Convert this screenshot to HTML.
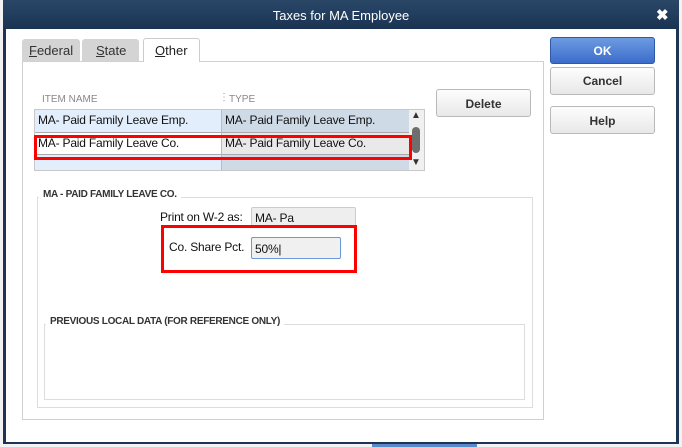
<!DOCTYPE html>
<html><head><style>
*{margin:0;padding:0;box-sizing:border-box}
body{width:682px;height:447px;background:#f0f0f0;font-family:"Liberation Sans",sans-serif;position:relative;overflow:hidden}
.a{position:absolute}
.btn{position:absolute;border:1px solid #b9b9b9;border-radius:3px;background:linear-gradient(#fdfdfd,#e8e8e8);font-size:12px;font-weight:bold;color:#333;text-align:center}
.t{font-size:12px;color:#111;letter-spacing:-0.2px}
.lg{position:absolute;background:#fff;padding:0 4px;font-size:10px;font-weight:bold;color:#333;letter-spacing:-0.3px}
</style></head><body>
<div class="a" style="left:0;top:0;width:682px;height:447px;background:#f3f3f3"></div>
<div class="a" style="left:372px;top:443px;width:105px;height:4px;background:#5b88c8"></div>
<div class="a" style="left:3px;top:0;width:676px;height:444px;background:#1d3554"></div>
<div class="a" style="left:6px;top:29px;width:670px;height:413px;background:#fff"></div>
<div class="a" style="left:3px;top:0;width:676px;height:29px;background:linear-gradient(#2a4768,#1b3352)"></div>
<div class="a" style="left:0;top:8px;width:682px;text-align:center;color:#fff;font-size:13px">Taxes for MA Employee</div>
<div class="a" style="left:656px;top:6px;color:#fff;font-size:15px;font-weight:bold">✖</div>

<div class="a" style="left:22px;top:39px;width:58px;height:23px;background:#d4d4d4;border-radius:3px 3px 0 0;font-size:13px;padding:4px 0 0 7px;color:#333"><u>F</u>ederal</div>
<div class="a" style="left:82px;top:39px;width:57px;height:23px;background:#d4d4d4;border-radius:3px 3px 0 0;font-size:13px;padding:4px 0 0 14px;color:#333"><u>S</u>tate</div>
<div class="a" style="left:143px;top:38px;width:57px;height:24px;background:#fff;border:1px solid #ccc;border-bottom:none;border-radius:3px 3px 0 0;font-size:13px;padding:4px 0 0 11px;color:#222"><u>O</u>ther</div>
<div class="a" style="left:22px;top:61px;width:522px;height:359px;border:1px solid #d0d0d0;border-top:none"></div>
<div class="a" style="left:200px;top:61px;width:344px;height:1px;background:#d0d0d0"></div>
<div class="a" style="left:22px;top:61px;width:121px;height:1px;background:#d0d0d0"></div>

<div class="a" style="left:42px;top:94px;font-size:10px;color:#888">ITEM NAME</div>
<div class="a" style="left:219px;top:92px;font-size:10px;color:#999">⋮</div>
<div class="a" style="left:229px;top:94px;font-size:10px;color:#888">TYPE</div>
<div class="a" style="left:34px;top:109px;width:391px;height:62px;border:1px solid #c8c8c8;background:#e3eefc"></div>
<div class="a" style="left:221px;top:110px;width:188px;height:60px;background:#cfdae7;border-left:1px solid #bbb"></div>
<div class="a" style="left:35px;top:132px;width:186px;height:23px;background:#fff;border-top:1px solid #aaa;border-bottom:1px solid #aaa"></div>
<div class="a" style="left:221px;top:132px;width:188px;height:23px;background:#e9e9e9;border-top:1px solid #aaa;border-bottom:1px solid #aaa;border-left:1px solid #bbb"></div>
<div class="a" style="left:409px;top:110px;width:15px;height:60px;background:#f0f0f0"></div>
<div class="a" style="left:411px;top:110px;font-size:10px;color:#333">▲</div>
<div class="a" style="left:412px;top:127px;width:8px;height:26px;background:#6e6e6e;border-radius:4px"></div>
<div class="a" style="left:411px;top:157px;font-size:10px;color:#333">▼</div>
<div class="a t" style="left:38px;top:113px">MA- Paid Family Leave Emp.</div>
<div class="a t" style="left:225px;top:113px">MA- Paid Family Leave Emp.</div>
<div class="a t" style="left:38px;top:136px">MA- Paid Family Leave Co.</div>
<div class="a t" style="left:225px;top:136px">MA- Paid Family Leave Co.</div>
<div class="a" style="left:34px;top:135px;width:378px;height:25px;border:3px solid #f00"></div>

<div class="btn" style="left:436px;top:89px;width:95px;height:28px;padding-top:7px">Delete</div>
<div class="btn" style="left:550px;top:37px;width:105px;height:27px;padding-top:6px;background:linear-gradient(#6d9be0,#3c6ccc);border-color:#2e58a8;color:#fff">OK</div>
<div class="btn" style="left:550px;top:67px;width:105px;height:28px;padding-top:6px">Cancel</div>
<div class="btn" style="left:550px;top:106px;width:105px;height:28px;padding-top:7px">Help</div>

<div class="a" style="left:37px;top:197px;width:496px;height:211px;border:1px solid #ddd"></div>
<div class="lg" style="left:39px;top:189px">MA - PAID FAMILY LEAVE CO.</div>
<div class="a t" style="left:160px;top:210px">Print on W-2 as:</div>
<div class="a" style="left:251px;top:207px;width:105px;height:21px;background:#eee;border:1px solid #ccc;border-radius:2px"></div>
<div class="a t" style="left:255px;top:211px">MA- Pa</div>
<div class="a" style="left:161px;top:225px;width:196px;height:48px;border:3px solid #f00"></div>
<div class="a t" style="left:169px;top:240px">Co. Share Pct.</div>
<div class="a" style="left:251px;top:237px;width:90px;height:22px;background:#f0f0f0;border:1px solid #6c9ad8;border-radius:2px"></div>
<div class="a t" style="left:255px;top:242px">50%|</div>
<div class="a" style="left:44px;top:324px;width:481px;height:76px;border:1px solid #ddd"></div>
<div class="lg" style="left:46px;top:316px">PREVIOUS LOCAL DATA (FOR REFERENCE ONLY)</div>
</body></html>
